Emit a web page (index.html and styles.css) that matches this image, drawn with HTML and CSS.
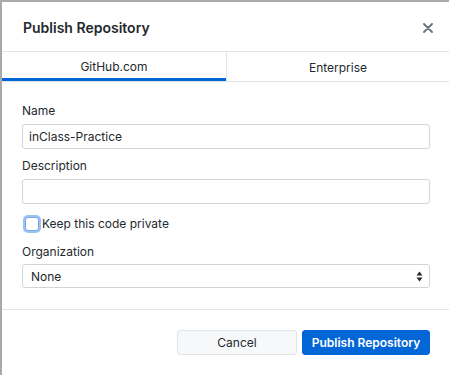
FILE: index.html
```html
<!DOCTYPE html>
<html lang="en">
<head>
    <meta charset="UTF-8">
    <title>Publish Repository</title>
    <link rel="stylesheet" href="styles.css">
</head>
<body>

    <div class="dialog">
        <header class="dialog-header">
            <h1>Publish Repository</h1>
            <button class="close-btn" aria-label="Close">
                <svg width="10" height="10" viewBox="0 0 10 10">
                    <path d="M1 1L9 9M9 1L1 9" stroke="#6a737d" stroke-width="1.8" stroke-linecap="round"/>
                </svg>
            </button>
        </header>

        <!-- Tabs -->
        <nav class="tab-bar">
            <div class="tab active">GitHub.com</div>
            <div class="tab">Enterprise</div>
        </nav>

        <form class="publish-form">
            <label class="field-label" for="name">Name</label>
            <input type="text" id="name" class="text-input" value="inClass-Practice">

            <label class="field-label" for="description">Description</label>
            <input type="text" id="description" class="text-input">

            <label class="checkbox-row">
                <span class="checkbox"></span>
                Keep this code private
            </label>

            <label class="field-label org-label" for="org">Organization</label>
            <div class="select-wrap">
                <select id="org" class="select-input">
                    <option>None</option>
                </select>
                <svg class="select-arrows" width="7" height="11" viewBox="0 0 7 11">
                    <path d="M3.5 0.5L6.5 4.5H0.5Z" fill="#24292e"/>
                    <path d="M3.5 10.5L6.5 6.5H0.5Z" fill="#24292e"/>
                </svg>
            </div>
        </form>

        <footer class="dialog-footer">
            <button type="button" class="btn">Cancel</button>
            <button type="submit" class="btn btn-primary">Publish Repository</button>
        </footer>
    </div>

</body>
</html>
```

FILE: styles.css
```css
/* Global Styles */
body {
    margin: 0;
    padding: 0;
    font-family: Inter, "Liberation Sans", Arial, sans-serif;
    font-size: 12px;
    color: #24292e;
    background-color: #ffffff;
}

.dialog {
    width: 447px;
    height: 373px;
    border-top: 2px solid #a9a9a9;
    border-left: 2px solid #a9a9a9;
    display: flex;
    flex-direction: column;
    background: #ffffff;
}

.dialog-header {
    height: 50px;
    display: flex;
    align-items: center;
    justify-content: space-between;
    padding: 0 12px 0 21px;
    border-bottom: 1px solid #e1e4e8;
    box-sizing: border-box;
}

.dialog-header h1 {
    margin: 0;
    font-size: 14px;
    font-weight: 600;
    position: relative;
    top: 1px;
}

.close-btn {
    border: none;
    background: none;
    padding: 4px;
    cursor: pointer;
    display: flex;
    position: relative;
    top: 1px;
}

/* Tabs */
.tab-bar {
    display: flex;
    height: 29px;
    border-bottom: 1px solid #e1e4e8;
}

.tab {
    flex: 0 0 224px;
    display: flex;
    align-items: center;
    justify-content: center;
    font-size: 12px;
    box-sizing: border-box;
    padding-top: 1px;
}

.tab + .tab {
    flex: 1;
    border-left: 1px solid #e1e4e8;
}

.tab.active {
    border-bottom: 3px solid #0366d6;
    padding-top: 3px;
}

/* Form */
.publish-form {
    display: flex;
    flex-direction: column;
    padding: 21px 19px 21px 20px;
    border-bottom: 1px solid #e1e4e8;
}

.field-label {
    line-height: 16px;
    margin-bottom: 5px;
}

.org-label {
    margin-bottom: 4px;
}

.text-input,
.select-input {
    height: 25px;
    border: 1px solid #d1d5da;
    border-radius: 3px;
    font-family: inherit;
    font-size: 12px;
    color: #24292e;
    padding: 0 6px;
    margin: 0 0 9px 0;
    box-sizing: border-box;
    width: 100%;
    background: #ffffff;
}

.checkbox-row {
    display: flex;
    align-items: center;
    line-height: 16px;
    margin: 3px 0 12px 0;
}

.checkbox {
    width: 12px;
    height: 12px;
    border: 1px solid #7aa7e6;
    border-radius: 3px;
    background: #ffffff;
    box-shadow: 0 0 0 2px #9dc1f5;
    margin: 0 3px 0 3px;
}

.select-wrap {
    position: relative;
    display: flex;
}

.select-input {
    appearance: none;
    -webkit-appearance: none;
    padding-left: 8px;
    margin-bottom: 0;
    height: 24px;
}

.select-arrows {
    position: absolute;
    right: 7px;
    top: 7px;
}

/* Footer */
.dialog-footer {
    flex: 1;
    display: flex;
    justify-content: flex-end;
    align-items: flex-start;
    gap: 5px;
    padding: 20px 19px 0 0;
}

.btn {
    height: 25px;
    width: 120px;
    border: 1px solid #e1e4e8;
    border-radius: 3px;
    background: #f6f8fa;
    font-family: inherit;
    font-size: 12px;
    color: #24292e;
    cursor: pointer;
}

.btn-primary {
    width: 128px;
    background: #0366d6;
    border-color: #0366d6;
    color: #ffffff;
    font-weight: 600;
}
```
